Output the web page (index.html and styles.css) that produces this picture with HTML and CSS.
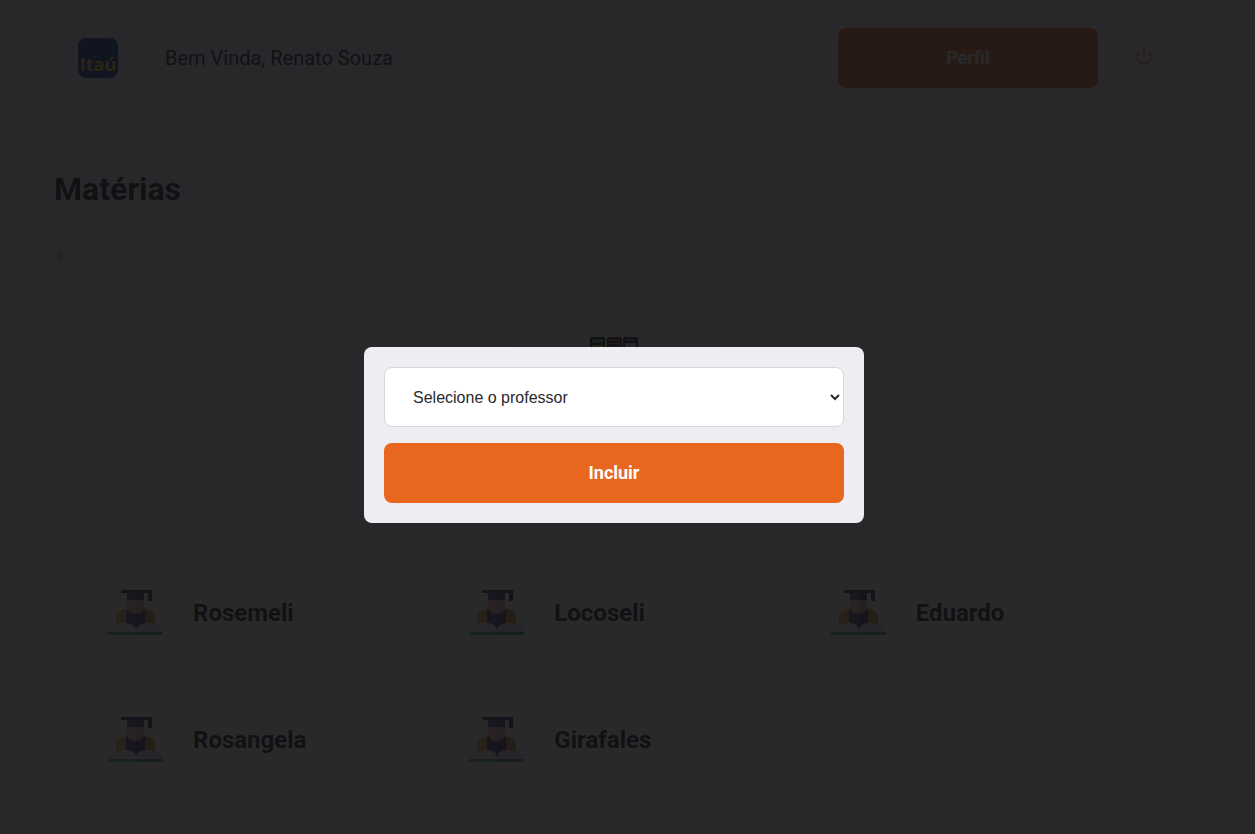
FILE: index.html
```html
<!DOCTYPE html>
<html lang="pt-BR">
<head>
<meta charset="utf-8">
<meta name="viewport" content="width=device-width, initial-scale=1">
<title>Matérias</title>
<link rel="stylesheet" href="styles.css">
</head>
<body>
<svg width="0" height="0" class="sprite" aria-hidden="true">
  <symbol id="teacher" viewBox="0 0 55 55">
    <path d="M8 40V31c0-2 1-3 2-4l8-4v17z" fill="#e8b040"/>
    <path d="M47 40V31c0-2-1-3-2-4l-8-4v17z" fill="#d88a38"/>
    <path d="M18 25l2-1h8v22H18z" fill="#463c78"/>
    <path d="M37 25l-2-1h-7v22h9z" fill="#342a64"/>
    <path d="M19 14h9v15c-3 0-6-1-8-4l-1-3z" fill="#f0b8a4"/>
    <path d="M36 14h-8v15c3 0 6-1 7-4l1-3z" fill="#d8a08c"/>
    <path d="M19 8h9v7h-9z" fill="#464678"/>
    <path d="M28 8h8v7h-8z" fill="#34345e"/>
    <path d="M13 5h31v11h-4V8H13z" fill="#26264a"/>
    <path d="M2 47v-6c5-2 10-3 15-3 6 0 10 2 11 7v2z" fill="#f0f0fa"/>
    <path d="M53 47v-6c-5-2-9-3-14-3-6 0-10 2-11 7v2z" fill="#dcdcf0"/>
    <path d="M0 47h28v3H0z" fill="#46b450"/>
    <path d="M28 47h27v3H28z" fill="#3c9678"/>
  </symbol>
</svg>

<div class="page">
  <header class="header">
    <div class="logo">Itaú</div>
    <span class="welcome">Bem Vinda, Renato Souza</span>
    <a class="button profile" href="#perfil">Perfil</a>
    <button class="power" type="button" aria-label="Sair">
      <svg width="18" height="18" viewBox="0 0 24 24" fill="none" stroke="currentColor" stroke-width="2" stroke-linecap="round" stroke-linejoin="round"><path d="M18.36 6.64a9 9 0 1 1-12.73 0M12 2v10"/></svg>
    </button>
  </header>

  <main>
    <h1>Matérias</h1>
    <a class="back" href="#voltar" aria-label="Voltar">
      <svg width="16" height="16" viewBox="0 0 24 24" fill="none" stroke="currentColor" stroke-width="2" stroke-linecap="round" stroke-linejoin="round"><path d="M19 12H5M12 19l-7-7 7-7"/></svg>
    </a>
    <div class="subject">
      <svg width="48" height="48" viewBox="0 0 48 48" stroke="#101010" stroke-width="2">
        <rect x="1" y="1" width="13" height="46" rx="2" fill="#f0b43c"/>
        <path d="M1 7V3q0-2 2-2h9q2 0 2 2v4z" fill="#5fa83c"/>
        <rect x="18" y="1" width="13" height="46" rx="2" fill="#e03264"/>
        <path d="M20 5h9M20 8h9"/>
        <rect x="34" y="1" width="13" height="46" rx="2" fill="#e6e6f0"/>
        <path d="M34 5V3q0-2 2-2h9q2 0 2 2v2z" fill="#507dc8"/>
      </svg>
    </div>
    <ul class="teachers">
      <li><svg width="55" height="55"><use href="#teacher"/></svg><strong>Rosemeli</strong></li>
      <li><svg width="55" height="55"><use href="#teacher"/></svg><strong>Locoseli</strong></li>
      <li><svg width="55" height="55"><use href="#teacher"/></svg><strong>Eduardo</strong></li>
      <li><svg width="55" height="55"><use href="#teacher"/></svg><strong>Rosangela</strong></li>
      <li><svg width="55" height="55"><use href="#teacher"/></svg><strong>Girafales</strong></li>
    </ul>
  </main>
</div>

<div class="overlay">
  <form class="modal" role="dialog" aria-label="Incluir professor">
    <select aria-label="Professor">
      <option>Selecione o professor</option>
      <option>Rosemeli</option>
      <option>Locoseli</option>
      <option>Eduardo</option>
    </select>
    <button class="button" type="button">Incluir</button>
  </form>
</div>
</body>
</html>
```
FILE: styles.css
```css
* {
  box-sizing: border-box;
  margin: 0;
  padding: 0;
}

body {
  background: #f0f0f5;
  color: #13131a;
  font: 400 16px Roboto, sans-serif;
}

.sprite {
  position: absolute;
}

.page {
  max-width: 1228px;
  padding: 28px 54px 40px;
}

.header {
  display: flex;
  align-items: center;
}

.logo {
  display: flex;
  align-items: flex-end;
  justify-content: center;
  width: 40px;
  height: 40px;
  margin: 0 47px 0 24px;
  border-radius: 8px;
  background: #0a2f96;
  color: #f0dc14;
  font: 700 18px/28px "Open Sans", sans-serif;
}

.welcome {
  font-size: 20px;
}

.button {
  display: block;
  height: 60px;
  border: 0;
  border-radius: 8px;
  background: #e8661e;
  color: #fff;
  font: 700 18px/60px Roboto, sans-serif;
  text-align: center;
  text-decoration: none;
}

.profile {
  width: 260px;
  margin-left: auto;
}

.power {
  display: grid;
  place-items: center;
  width: 60px;
  height: 60px;
  margin-left: 16px;
  padding-bottom: 4px;
  border: 1px solid #dcdce6;
  border-radius: 4px;
  background: transparent;
  color: #e8661e;
}

h1 {
  margin-top: 80px;
  font-size: 32px;
  line-height: 42px;
}

.back {
  display: block;
  width: 16px;
  height: 16px;
  margin-top: 38px;
  color: #e8661e;
}

.back svg {
  display: block;
}

.subject {
  width: 198px;
  height: 183px;
  margin: 50px auto 64px;
  padding-top: 23px;
  border-radius: 8px;
  background: #fffff5;
  text-align: center;
}

.teachers {
  display: grid;
  grid-template-columns: repeat(3, 1fr);
  gap: 24px;
  padding: 0 30px;
  list-style: none;
}

.teachers li {
  display: flex;
  align-items: center;
  gap: 30px;
  padding: 24px;
  border-radius: 8px;
  background: #fffff5;
  font-size: 24px;
}

.overlay {
  position: fixed;
  inset: 0;
  display: flex;
  align-items: center;
  justify-content: center;
  padding: 36px 27px 0 0;
  background: rgba(18, 18, 20, 0.9);
}

.modal {
  display: grid;
  gap: 16px;
  width: 500px;
  max-width: 100%;
  padding: 20px;
  border-radius: 8px;
  background: #eeedf2;
}

select {
  width: 100%;
  height: 60px;
  padding: 0 24px;
  padding-right: 0;
  border: 1px solid #d6d6e2;
  border-radius: 8px;
  background: #fff;
  color: #29292e;
  font: 400 16px "Liberation Sans", Arial, sans-serif;
}
```
